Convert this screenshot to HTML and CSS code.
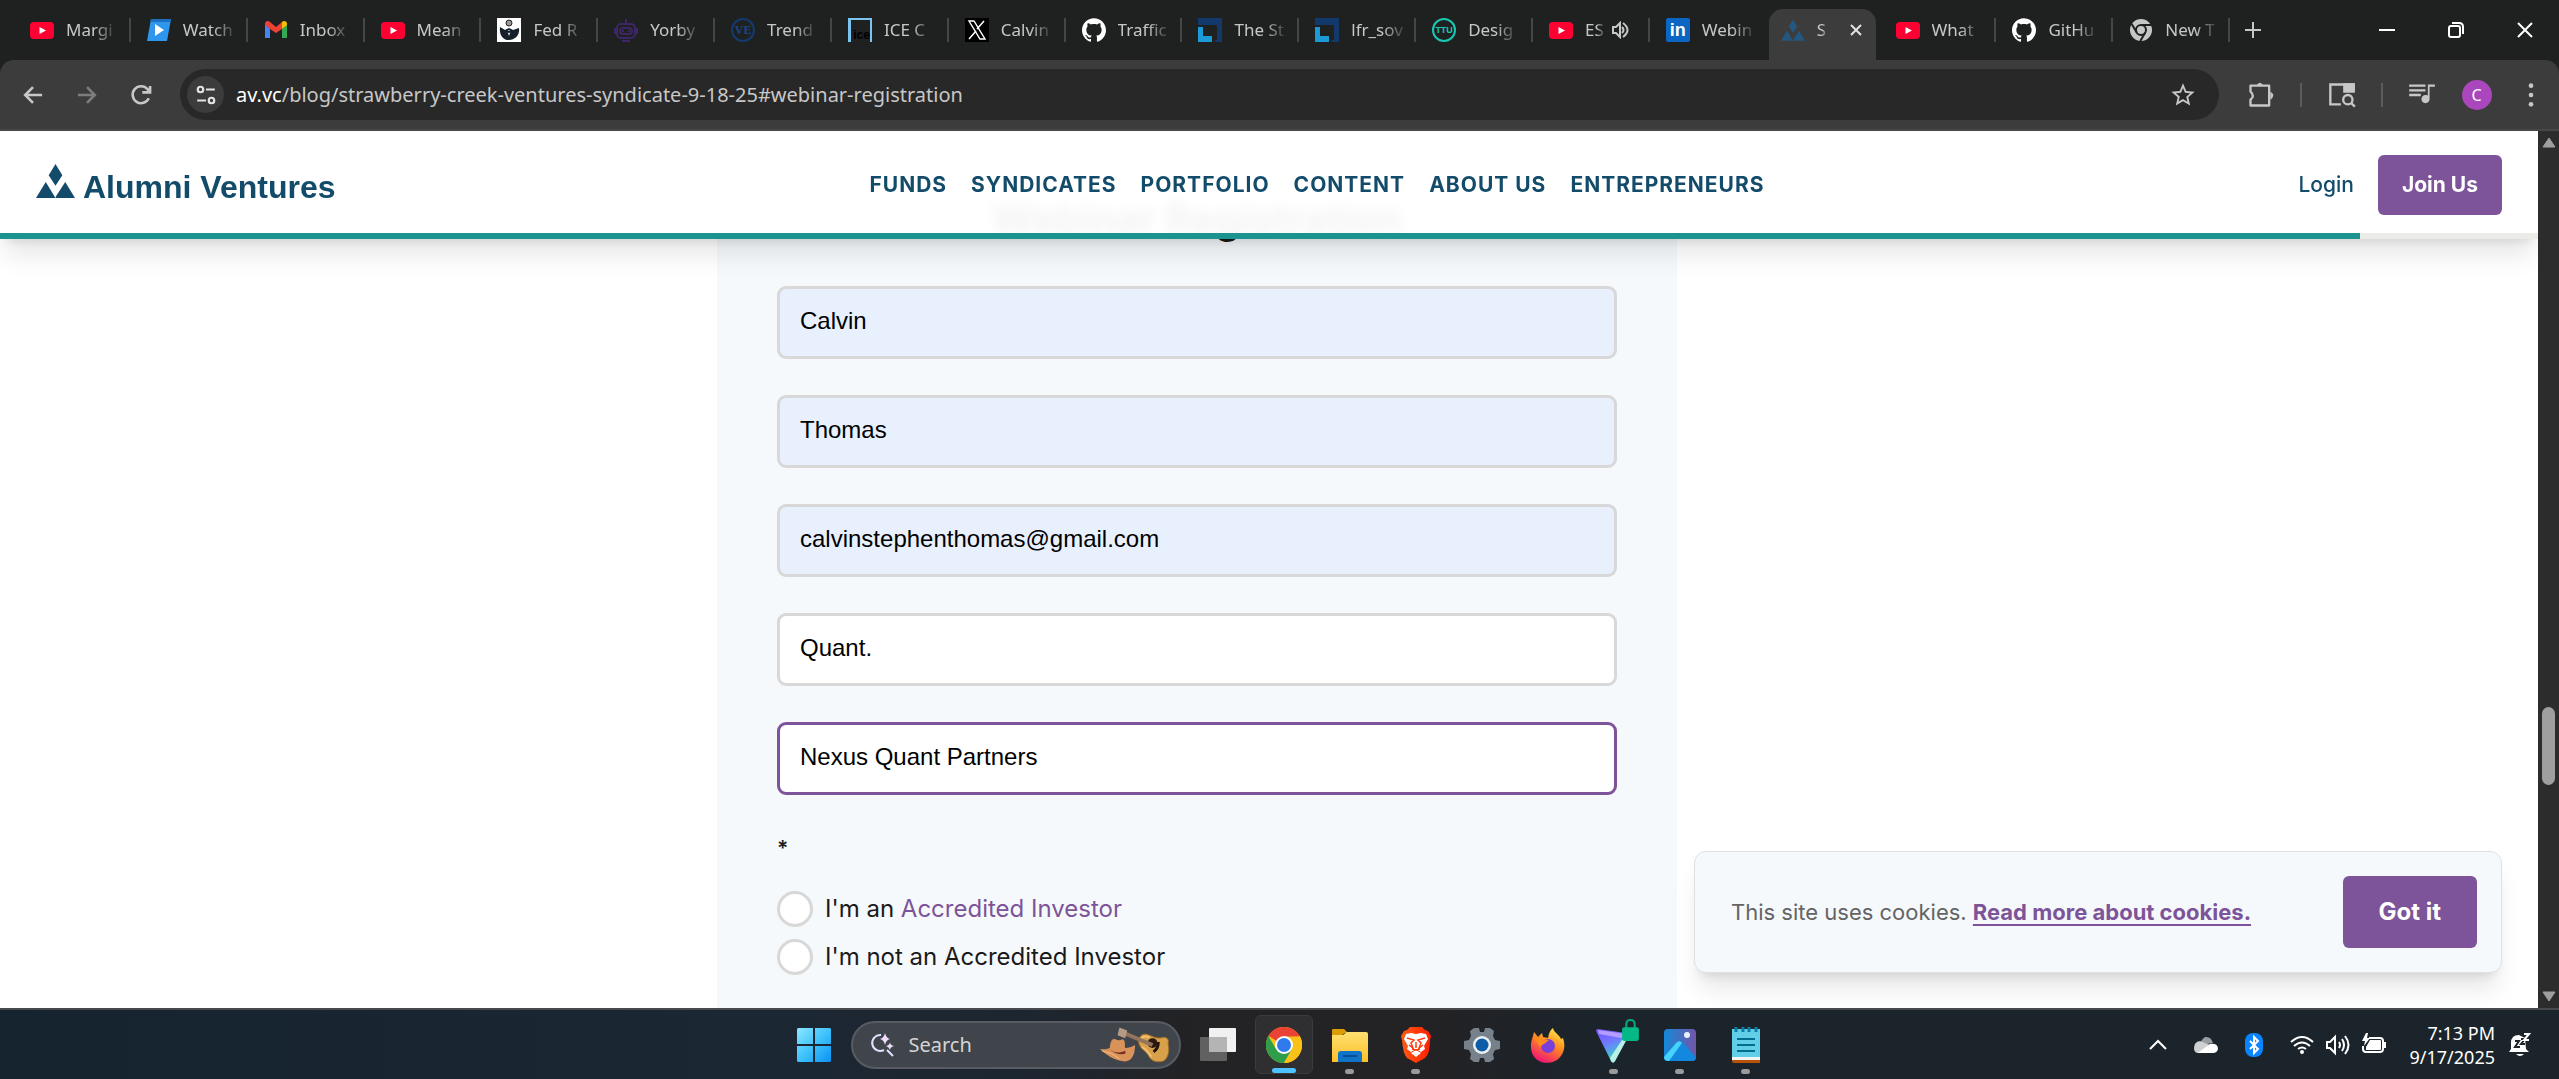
FILE: index.html
```html
<!DOCTYPE html>
<html lang="en">
<head>
<meta charset="utf-8">
<title>Alumni Ventures - Webinar Registration</title>
<link rel="stylesheet" href="styles.css">
</head>
<body>
<svg class="sprite" aria-hidden="true">
  <symbol id="youtube" viewBox="0 0 24 24"><rect y="4" width="24" height="17" rx="4" fill="#ff0033"/><path d="M9.500 9v7l6.500-3.500z" fill="#fff"/></symbol>
  <symbol id="github" viewBox="0 0 24 24"><path fill="#fff" d="M12 .297c-6.63 0-12 5.373-12 12 0 5.303 3.438 9.8 8.205 11.385.6.113.82-.258.82-.577 0-.285-.01-1.04-.015-2.04-3.338.724-4.042-1.61-4.042-1.61C4.422 18.07 3.633 17.7 3.633 17.7c-1.087-.744.084-.729.084-.729 1.205.084 1.838 1.236 1.838 1.236 1.07 1.835 2.809 1.305 3.495.998.108-.776.417-1.305.76-1.605-2.665-.3-5.466-1.332-5.466-5.93 0-1.31.465-2.38 1.235-3.22-.135-.303-.54-1.523.105-3.176 0 0 1.005-.322 3.3 1.23.96-.267 1.98-.399 3-.405 1.02.006 2.04.138 3 .405 2.28-1.552 3.285-1.23 3.285-1.23.645 1.653.24 2.873.12 3.176.765.84 1.23 1.91 1.23 3.22 0 4.61-2.805 5.625-5.475 5.92.42.36.81 1.096.81 2.22 0 1.606-.015 2.896-.015 3.286 0 .315.21.69.825.57C20.565 22.092 24 17.592 24 12.297c0-6.627-5.373-12-12-12"/></symbol>
  <symbol id="lfr" viewBox="0 0 24 24"><path d="M0 0h24v24h-7v-2h2V7H0z" fill="#12396a"/><path d="M0 9h5v9h9v6H0z" fill="#1b9ad6"/></symbol>
  <symbol id="peaks" viewBox="0 0 40 36"><path d="M20 0l7 12-7 11-7-11zM10 19l10 17H0zM30 19l10 17H21l-1-1z"/></symbol>
</svg>

<header class="tabstrip">
  <nav class="tabs" aria-label="Tabs">
    <div class="tab"><button class="tab-label"><svg class="fav"><use href="#youtube"/></svg><span class="title">Margi</span></button></div>
    <div class="tab"><button class="tab-label"><svg class="fav" viewBox="0 0 24 24"><path d="M4 1h20l-4 22H0z" fill="#2f96ee"/><path d="M4 1h20l-.5 3H3.500z" fill="#1b6fc0"/><path d="M8 6l9 6-9 6z" fill="#fff"/></svg><span class="title">Watch</span></button></div>
    <div class="tab"><button class="tab-label"><svg class="fav" viewBox="0 0 24 24"><path d="M1 6v14h5v-9z" fill="#4285f4"/><path d="M23 6v14h-5v-9z" fill="#34a853"/><path d="M1 6c0-3 3-4 5-2l6 5v6l-6-4-5-4z" fill="#ea4335"/><path d="M12 9l6-5v7l-6 4z" fill="#ea4335"/><path d="M18 4c2-2 5-1 5 2v1l-5 4z" fill="#fbbc04"/></svg><span class="title">Inbox</span></button></div>
    <div class="tab"><button class="tab-label"><svg class="fav"><use href="#youtube"/></svg><span class="title">Mean</span></button></div>
    <div class="tab"><button class="tab-label"><svg class="fav" viewBox="0 0 24 24"><path fill="#fff" d="M0 0h24v24H0z"/><circle cx="12" cy="5" r="3" fill="#999" stroke="#222"/><path d="M3 9l5 3 4-2 4 2 6-2c1 7-4 12-10 12S2 17 3 9z" fill="#15202b"/><path d="M10 12l2 6 2-6z" fill="#fff"/><path d="M9 12l3 2 3-2" fill="none" stroke="#15202b" stroke-width="2"/></svg><span class="title">Fed R</span></button></div>
    <div class="tab"><button class="tab-label"><svg class="fav" viewBox="0 0 24 24" fill="none" stroke="#3c2668" stroke-width="2"><rect x="3" y="6" width="18" height="14" rx="4"/><rect x="6" y="10" width="12" height="6" rx="3"/><path d="M12 1v5M1 10v6M23 10v6M8 23h8"/><path d="M9 12v2M15 12v2"/></svg><span class="title">Yorby</span></button></div>
    <div class="tab"><button class="tab-label"><span class="fav fav-ve">VE</span><span class="title">Trend</span></button></div>
    <div class="tab"><button class="tab-label"><span class="fav fav-ice">ice</span><span class="title">ICE C</span></button></div>
    <div class="tab"><button class="tab-label"><svg class="fav" viewBox="0 0 24 24"><path d="M0 0h24v24H0z"/><path d="M4 3h5l11 18h-5z" fill="none" stroke="#fff" stroke-width="1.400"/><path d="M19 3l-7 8M11 13l-7 8" stroke="#fff" stroke-width="1.500"/></svg><span class="title">Calvin</span></button></div>
    <div class="tab"><button class="tab-label"><svg class="fav"><use href="#github"/></svg><span class="title">Traffic</span></button></div>
    <div class="tab"><button class="tab-label"><svg class="fav"><use href="#lfr"/></svg><span class="title">The St</span></button></div>
    <div class="tab"><button class="tab-label"><svg class="fav"><use href="#lfr"/></svg><span class="title">lfr_sov</span></button></div>
    <div class="tab"><button class="tab-label"><span class="fav fav-ttu">TTU</span><span class="title">Desig</span></button></div>
    <div class="tab"><button class="tab-label"><svg class="fav"><use href="#youtube"/></svg><span class="title short">ES</span><svg class="sound" viewBox="0 0 18 18" fill="none" stroke="#c7c7c7" stroke-width="2"><path d="M1 6h3l4-4v14l-4-4H1zM10 6q3 3 0 6M11 2q9 7 0 14"/></svg></button></div>
    <div class="tab before-active"><button class="tab-label"><span class="fav fav-in">in</span><span class="title">Webin</span></button></div>
    <div class="tab active"><button class="tab-label"><svg class="fav peaks-fav"><use href="#peaks"/></svg><span class="title tiny">S</span></button><button class="close" aria-label="Close tab"><svg width="12" height="12" viewBox="0 0 12 12"><path d="M1 1l10 10M11 1L1 11" stroke="#e3e3e3" stroke-width="2"/></svg></button></div>
    <div class="tab"><button class="tab-label"><svg class="fav"><use href="#youtube"/></svg><span class="title">What</span></button></div>
    <div class="tab"><button class="tab-label"><svg class="fav"><use href="#github"/></svg><span class="title">GitHu</span></button></div>
    <div class="tab"><button class="tab-label"><svg class="fav" viewBox="0 0 24 24"><circle cx="12" cy="12" r="11" fill="#c4c7c5"/><circle cx="12" cy="12" r="5" fill="#c4c7c5" stroke="#1f2120" stroke-width="2"/><path d="M12 7h10M7.700 14.500l-5-8.500M16.300 14.500l-5 8.500" stroke="#1f2120" stroke-width="2"/></svg><span class="title">New T</span></button></div>
  </nav>
  <button class="newtab" aria-label="New tab"><svg width="16" height="16" viewBox="0 0 16 16"><path d="M8 0v16M0 8h16" stroke="#c7c7c7" stroke-width="2"/></svg></button>
  <div class="winctl">
    <button aria-label="Minimize"><svg width="16" height="16" viewBox="0 0 16 16"><path d="M0 8h16" stroke="#fff" stroke-width="2"/></svg></button>
    <button aria-label="Restore"><svg width="16" height="16" viewBox="0 0 16 16" fill="none" stroke="#fff" stroke-width="2"><rect x="1" y="4" width="11" height="11" rx="2"/><path d="M4 1h7q4 0 4 4v7"/></svg></button>
    <button aria-label="Close"><svg width="16" height="16" viewBox="0 0 16 16"><path d="M1 1l14 14M15 1L1 15" stroke="#fff" stroke-width="2"/></svg></button>
  </div>
</header>

<div class="toolbar">
  <div class="navbtns">
    <button aria-label="Back"><svg viewBox="0 0 20 20" fill="none" stroke="#c7c7c7" stroke-width="2"><path d="M17 10H4M10 4l-6 6 6 6"/></svg></button>
    <button aria-label="Forward"><svg viewBox="0 0 20 20" fill="none" stroke="#7d7d7d" stroke-width="2"><path d="M3 10h13M10 4l6 6-6 6"/></svg></button>
    <button aria-label="Reload"><svg viewBox="0 0 20 20" fill="none" stroke="#c7c7c7" stroke-width="2"><path d="M16 12.500a6.500 6.500 0 1 1-1-7L17 8M17 3v5h-6"/></svg></button>
  </div>
  <div class="omnibox">
    <button class="siteinfo" aria-label="Site information"><svg viewBox="0 0 20 20" fill="none" stroke="#e3e3e3" stroke-width="2"><circle cx="5" cy="5" r="2.500"/><path d="M10 5h8M2 15h8"/><circle cx="15" cy="15" r="2.500"/></svg></button>
    <div class="url"><b>av.vc</b>/blog/strawberry-creek-ventures-syndicate-9-18-25#webinar-registration</div>
    <button class="star" aria-label="Bookmark"><svg viewBox="0 0 24 24"><path fill="#c7c7c7" d="M22 9.240l-7.190-.62L12 2 9.190 8.630 2 9.240l5.460 4.730L5.820 21 12 17.270 18.180 21l-1.630-7.030L22 9.240zM12 15.400l-3.760 2.270 1-4.280-3.320-2.880 4.380-.38L12 6.100l1.710 4.040 4.380.38-3.320 2.880 1 4.280L12 15.400z"/></svg></button>
  </div>
  <div class="actions">
    <button aria-label="Extensions"><svg viewBox="0 0 24 24" fill="none" stroke="#c7c7c7" stroke-width="2"><path d="M3 4h16v17H3v-5q4-3 0-7z" stroke-linejoin="round"/><path d="M8 4q3-5 6 0zM20 9q5 3.500 0 7z" fill="#c7c7c7" stroke="none"/></svg></button>
    <i class="divider"></i>
    <button aria-label="Search this page"><svg viewBox="0 0 24 24" fill="none" stroke="#c7c7c7" stroke-width="2"><path d="M11 20H2V3h20v6"/><path d="M14 3h8v6h-8z" fill="#c7c7c7"/><circle cx="17" cy="16" r="4"/><path d="M20 19l3 3"/></svg></button>
    <i class="divider"></i>
    <button aria-label="Media controls"><svg viewBox="0 0 24 24"><path fill="#c7c7c7" d="M15 3H1v2h14V3zm0 4H1v2h14V7zM1 13h10v-2H1v2zM17 3v9.500c-1-.5-1.500-.5-2-.5-2 0-3.500 1.500-3.500 3.500S13 19 15 19s3.500-1.500 3.500-3.500V5H23V3h-6z"/></svg></button>
    <button class="avatar" aria-label="Profile">C</button>
    <button aria-label="Menu"><svg viewBox="0 0 24 24" fill="#c7c7c7"><circle cx="12" cy="4" r="2"/><circle cx="12" cy="12" r="2"/><circle cx="12" cy="20" r="2"/></svg></button>
  </div>
</div>

<div class="window">
  <div class="page">
    <main class="article">
      <form class="register">
        <h2>Webinar Registration</h2>
        <input class="filled" type="text" aria-label="First name" value="Calvin">
        <input class="filled" type="text" aria-label="Last name" value="Thomas">
        <input class="filled" type="email" aria-label="Email" value="calvinstephenthomas@gmail.com">
        <input type="text" aria-label="Title" value="Quant.">
        <input class="current" type="text" aria-label="Company" value="Nexus Quant Partners">
        <fieldset>
          <legend>*</legend>
          <div class="choice"><input type="radio" name="accredited" id="yes"><label for="yes">I'm an <a href="#accredited">Accredited Investor</a></label></div>
          <div class="choice"><input type="radio" name="accredited" id="no"><label for="no">I'm not an Accredited Investor</label></div>
        </fieldset>
      </form>
    </main>

    <header class="site-header">
      <div class="bar">
        <a class="logo" href="#home"><svg width="39" height="34" viewBox="0 0 40 36" preserveAspectRatio="none"><use href="#peaks"/></svg><span>Alumni Ventures</span></a>
        <nav class="menu">
          <a href="#funds">FUNDS</a><a href="#syndicates">SYNDICATES</a><a href="#portfolio">PORTFOLIO</a><a href="#content">CONTENT</a><a href="#about">ABOUT US</a><a href="#entrepreneurs">ENTREPRENEURS</a>
        </nav>
        <div class="account"><a href="#login">Login</a><button class="primary join">Join Us</button></div>
      </div>
      <div class="progress"><div style="width:93%"></div></div>
    </header>

    <aside class="cookies">
      <p>This site uses cookies. <a href="#cookies">Read more about cookies.</a></p>
      <button class="primary gotit">Got it</button>
    </aside>
  </div>
  <div class="scrollbar" aria-hidden="true">
    <svg width="14" height="11" viewBox="0 0 14 11"><path d="M7 1l6 9H1z" fill="#9f9f9f" stroke="#9f9f9f" stroke-linejoin="round"/></svg>
    <div class="track"><div class="thumb"></div></div>
    <svg width="14" height="11" viewBox="0 0 14 11"><path d="M7 10l6-9H1z" fill="#9f9f9f" stroke="#9f9f9f" stroke-linejoin="round"/></svg>
  </div>
</div>

<footer class="taskbar">
  <svg class="defs" width="0" height="0"><defs>
    <linearGradient id="win" x2="1" y2="1"><stop stop-color="#8ce6ff"/><stop offset=".5" stop-color="#3fc3fb"/><stop offset="1" stop-color="#0a92f5"/></linearGradient>
    <linearGradient id="fox" x1=".8" y1="0" x2=".3" y2="1"><stop stop-color="#fff04a"/><stop offset=".45" stop-color="#ff8a1e"/><stop offset="1" stop-color="#f0107a"/></linearGradient>
    <linearGradient id="vpn" x2=".4" y2="1"><stop stop-color="#7a4dff"/><stop offset=".5" stop-color="#6e7cff"/><stop offset="1" stop-color="#2ee0c0"/></linearGradient>
    <linearGradient id="gold" x2="0" y2="1"><stop stop-color="#ffdf70"/><stop offset="1" stop-color="#fbc02a"/></linearGradient>
    <linearGradient id="photo" x2="1"><stop stop-color="#1488d8"/><stop offset="1" stop-color="#7256a8"/></linearGradient>
    <linearGradient id="brave" x2="1"><stop stop-color="#ff5a16"/><stop offset="1" stop-color="#ff1f00"/></linearGradient>
  </defs></svg>
  <div></div>
  <div class="apps">
    <button class="app" aria-label="Start"><svg viewBox="0 0 36 36"><path fill="url(#win)" d="M2 1h15v16H1V2zM19 1h15l1 1v15H19zM1 19h16v16H2l-1-1zM19 19h16v15l-1 1H19z"/></svg></button>
    <label class="search">
      <svg class="lens" viewBox="0 0 26 26" fill="none" stroke="#dbe4ff" stroke-width="2"><path d="M12 3a8 8 0 1 0 3 15M18 18l6 6"/><path d="M16 1q1 5 5 6-4 1-5 6-1-5-5-6 4-1 5-6zM21 10q0 3 4 4-4 1-4 4-1-3-4-4 4-1 4-4z" fill="#f0dcff" stroke="none"/></svg>
      <input type="text" aria-label="Search" placeholder="Search">
      <svg class="guitar" viewBox="0 0 72 36"><path d="M40 12c2-6 7-6 11-4 5 2 9 4 14 2 5 0 6 3 5 7 2 7 0 16-6 18-7 1-12-1-14-6-2-5-12-8-10-17z" fill="#d9a04a" stroke="#9c6a25"/><path d="M42 13c1-5 6-4 9-3M43 20c6 3 7 7 10 10" fill="none" stroke="#f0c172" stroke-width="2"/><circle cx="54" cy="16" r="5" fill="#2b1a10"/><path d="M55 25q5-3 5-10" stroke="#22150e" stroke-width="3" fill="none"/><path d="M23 5l31 13" stroke="#94735c" stroke-width="4"/><path d="M20 0l8 3-2 8-8-3z" fill="#b69a84"/><path d="M0 22c5 1 7 0 10-1 1-7 2-10 6-9q3 2 7 0c4 1 2 7 3 9 3 0 7-1 10-3 0 8-2 16-10 17C15 34 6 28 0 22z" fill="#d9935a"/><path d="M10 22q7 6 16 2v3q-9 2-16-5" fill="#7a2f20"/><path d="M2 24q11 2 18 8" stroke="#f5be85" fill="none"/></svg>
    </label>
    <button class="app" aria-label="Task view"><svg viewBox="0 0 36 36"><rect x="9" y="1" width="27" height="24" rx="1" fill="#f1f1f1"/><rect y="10" width="27" height="24" rx="1" fill="#777" opacity=".75"/><path d="M9 10h18v15H9z" fill="#b4b4b4"/></svg></button>
    <button class="app running focused" aria-label="Chrome"><svg viewBox="0 0 36 36"><circle cx="18" cy="18" r="18" fill="#fbc116"/><path d="M18 18L2.400 9A18 18 0 0 1 33.600 9z" fill="#ea4335"/><path d="M2.400 9A18 18 0 0 0 18 36l8-13.500L10 22z" fill="#2f9e4b"/><path d="M18 9.500h16A18 18 0 0 1 18 36l8-14z" fill="#fbc116"/><circle cx="18" cy="18" r="9" fill="#fff"/><circle cx="18" cy="18" r="7" fill="#2f7bed"/></svg></button>
    <button class="app running" aria-label="File Explorer"><svg viewBox="0 0 36 36"><path d="M0 3q0-1 1-1h11l4 4h-3l-3 2H0z" fill="#dc9c05"/><path d="M0 8h11l4-3h19q2 0 2 2v28H0z" fill="url(#gold)"/><path d="M6 35V27q0-3 3-3h18q3 0 3 3v8z" fill="#0f74c8"/><path d="M11 29h14" stroke="#084c93" stroke-width="2"/></svg></button>
    <button class="app running" aria-label="Brave"><svg viewBox="0 0 36 36"><path d="M9 3l3-3h12l3 3 3 1 3 5-1 4q0 14-5 18l-9 5-9-5Q5 27 4 13L3 9l3-5z" fill="url(#brave)"/><path d="M8 7l5-1 5 1 5-1 5 1 2 5-4 7 1 3-4 3-5-3-5 3-4-3 1-3-4-7z" fill="#fff"/><path d="M13 26l5-3 5 3-5 4z" fill="#fff"/><path d="M9 11l7 2-3 3 2 5-4-3M27 11l-7 2 3 3-2 5 4-3M18 15v6M14 22l4 1 4-1" fill="none" stroke="#ff3b0c" stroke-width="1.500"/></svg></button>
    <button class="app" aria-label="Settings"><svg viewBox="0 0 36 36"><path d="M10 1h5l1 4h4l1-4h5l4 3-1 5 2 4 5 1v8l-5 1-2 4 1 5-4 3h-5l-1-4h-4l-1 4h-5l-4-3 1-5-2-4-5-1v-8l5-1 2-4-1-5z" fill="#77818b"/><circle cx="18" cy="18" r="9" fill="#eceff2"/><circle cx="18" cy="18" r="6.500" fill="#0d5ca8"/></svg></button>
    <button class="app" aria-label="Firefox"><svg viewBox="0 0 36 36"><path d="M3 9l1-4 4 5 4-4 1 4 5 1c1-5 2-8 5-10 1 5 6 6 8 11l2-1c3 8 1 17-6 22-10 6-22 2-25-7-2-6-1-12 1-17z" fill="url(#fox)"/><circle cx="18" cy="19" r="7" fill="#7a3fd8"/><path d="M4 11q5-2 9 1l6 1-5 4q-3 1-3 4-4-5-7-10z" fill="#ff8a1e"/></svg></button>
    <button class="app running" aria-label="VPN"><svg viewBox="0 0 36 36"><path d="M0 4q0-2 2-2l28 4q3 1 2 4L19 34q-2 3-4 0z" fill="url(#vpn)"/><path d="M26 13l6-3-13 24q-2 3-4 0l-1-3z" fill="#b8f0e4"/><path d="M2 3l28 4-5 4L3 7z" fill="#b39dff"/></svg><svg class="lock" viewBox="0 0 16 22"><path d="M4 9V5q0-4 4-4t4 4v4" fill="none" stroke="#07a876" stroke-width="2"/><rect y="8" width="16" height="13" rx="2" fill="#04b985"/></svg></button>
    <button class="app running" aria-label="Photos"><svg viewBox="0 0 36 36"><rect x="2" y="2" width="32" height="32" rx="4" fill="url(#photo)"/><path d="M2 30l13-15q2-2 5 0l14 15q0 4-4 4H6q-4 0-4-4z" fill="#1487df"/><path d="M2 30l13-15q3-2 5 1L7 34q-5 0-5-4z" fill="#43d3fb"/><circle cx="25" cy="8" r="3" fill="#e8f2ff"/></svg></button>
    <button class="app running" aria-label="Notepad"><svg viewBox="0 0 36 36"><path d="M4 30h28v6H6q-2 0-2-2z" fill="#b45309"/><path d="M4 28h28v5H4z" fill="#f3f3f3"/><path d="M4 2h28v28H4z" fill="#62cfe8"/><path d="M9 12h18M9 18h18M9 24h18" stroke="#046c91" stroke-width="2"/><path d="M8 0v5M15 0v5M21 0v5M28 0v5" stroke="#0a7fa8" stroke-width="3"/></svg></button>
  </div>
  <div class="tray">
    <button aria-label="Hidden icons"><svg viewBox="0 0 24 24" fill="none" stroke="#fff" stroke-width="2"><path d="M4 16l8-8 8 8"/></svg></button>
    <button aria-label="OneDrive"><svg viewBox="0 0 24 24"><path d="M7 12q-1-5 4-8 6-1 8 6z" fill="#9b9c9e"/><path d="M0 15q0-6 6-7l10 4-13 8q-3-1-3-5z" fill="#cfd0d1"/><path d="M3 20l13-9q8-1 8 5-1 4-5 4z" fill="#fff"/></svg></button>
    <button aria-label="Bluetooth"><svg viewBox="0 0 24 24"><rect x="3" width="18" height="24" rx="8" fill="#0a84ff"/><path d="M8 8l8 8-4 4V4l4 4-8 8" fill="none" stroke="#fff" stroke-width="2"/></svg></button>
    <button class="status" aria-label="Network, sound and battery">
      <svg viewBox="0 0 24 24" fill="none" stroke="#fff" stroke-width="2"><path d="M1 9q11-10 22 0M4 13q8-7 16 0M8 16q4-3 8 0"/><circle cx="12" cy="19" r="1"/></svg>
      <svg viewBox="0 0 24 24" fill="none" stroke="#fff" stroke-width="2"><path d="M1 9h3l5-5v16l-5-5H1zM13 9q2 3 0 6M16 6q4 6 0 12M19 3q7 9 0 18"/></svg>
      <svg viewBox="0 0 24 24"><path d="M7 5h11q3 0 3 3v8q0 3-3 3H4q-3 0-3-3v-3" fill="none" stroke="#fff" stroke-width="2"/><path d="M8 7h10q1 0 1 1v8q0 1-1 1H4v-3zM22 9h2v6h-2zM4 0L0 8h3l-1 5 6-8H5l1-5z" fill="#fff"/></svg>
    </button>
    <div class="clock"><span>7:13 PM</span><span>9/17/2025</span></div>
    <button aria-label="Notifications"><svg viewBox="0 0 24 24"><path d="M4 16V10q0-8 8-8l6 3 1 11 3 3H2z" fill="#fff"/><path d="M9 21h8q-4 4-8 0z" fill="#fff"/><path d="M8 8h4l-4 6h5M14 6h4l-4 5h4" stroke="#1b242b" stroke-width="2" fill="none"/><path d="M17 1h5l-5 6h5" stroke="#fff" stroke-width="2" fill="none"/></svg></button>
  </div>
</footer>
</body>
</html>
```
FILE: styles.css
```css
* { box-sizing: border-box; }
body {
  margin: 0;
  height: 100vh;
  display: flex;
  flex-direction: column;
  overflow: hidden;
  background: #1f2120;
  font-family: "Noto Sans", "Open Sans", sans-serif;
}
button { border: 0; padding: 0; background: none; font: inherit; color: inherit; }
a { text-decoration: none; color: inherit; }
svg { display: block; flex: none; }
.sprite { position: absolute; width: 0; height: 0; }

/* Tab strip */
.tabstrip { display: flex; height: 60px; padding-left: 14px; color: #c7c7c7; font-size: 17px; }
.tabs { display: flex; flex: 0 1 2216px; min-width: 0; }
.tab { flex: 1 1 117px; min-width: 0; display: flex; align-items: center; padding-left: 16px; position: relative; }
.tab::after { content: ""; position: absolute; right: 0; top: 18px; width: 2px; height: 24px; background: #444746; }
.tab.before-active::after, .tab.active::after { display: none; }
.tab-label { display: flex; align-items: center; gap: 12px; min-width: 0; }
.fav { width: 24px; height: 24px; flex: none; }
.title {
  min-width: 46px; white-space: nowrap; text-align: left; line-height: 28px;
  -webkit-mask-image: linear-gradient(to right, #000 60%, rgba(0,0,0,.2));
  mask-image: linear-gradient(to right, #000 60%, rgba(0,0,0,.2));
}
.title.short, .title.tiny { min-width: 0; }
.title.short { margin-right: -4px; }
.sound { width: 18px; height: 18px; }
.fav-ve, .fav-ttu, .fav-ice, .fav-in { display: grid; place-items: center; line-height: 1; }
.fav-ve { border: 2px solid #153a70; border-radius: 50%; color: #17468c; font: bold 12px "Liberation Serif", serif; }
.fav-ttu { border: 2px solid #19c8b4; border-radius: 50%; color: #19c8b4; font: bold 9px "Liberation Sans", sans-serif; }
.fav-ice { border: solid #7cc4f0; border-width: 2px 2px 0 3px; color: #000; font: bold 12px "Liberation Sans", sans-serif; place-items: end; }
.fav-in { border-radius: 2px; background: #0a66c2; color: #fff; font: bold 18px "Liberation Sans", sans-serif; }
.tab.active { background: #3c3c3c; border-radius: 14px 14px 0 0; margin: 9px 4px 0 2px; padding: 0 14px 0 12px; justify-content: space-between; flex-basis: 107px; }
.tab.active .tab-label, .tab.active .close { margin-top: -9px; }
.peaks-fav { fill: #24577f; }
.newtab { width: 46px; display: grid; place-items: center; }
.winctl { margin-left: auto; display: flex; }
.winctl button { width: 69px; display: grid; place-items: center; }

/* Toolbar */
.toolbar {
  display: flex; align-items: center; height: 71px; flex: none; padding: 0 14px 0 6px; gap: 12px;
  background: #3c3c3c; border-bottom: 2px solid #474747; border-radius: 14px 14px 0 0;
}
.navbtns { display: flex; width: 162px; }
.navbtns button { width: 54px; display: grid; place-items: center; }
.navbtns svg, .actions svg, .star svg { width: 28px; height: 28px; }
.navbtns svg { width: 26px; }
.omnibox { flex: 1; display: flex; align-items: center; height: 51px; padding: 0 22px 0 7px; border-radius: 26px; background: #282828; }
.siteinfo { width: 37px; height: 37px; border-radius: 50%; background: #3c3c3c; display: grid; place-items: center; }
.siteinfo svg { width: 22px; height: 22px; }
.url { flex: 1; padding-left: 12px; color: #c7c7c7; font-size: 20px; line-height: 28px; }
.url b { font-weight: 400; color: #fff; }
.actions { display: flex; align-items: center; justify-content: space-between; width: 314px; padding-left: 16px; }
.divider { width: 2px; height: 24px; background: #5c5c5c; }
.avatar { width: 30px; height: 30px; border-radius: 50%; background: #ab47bc; color: #fff; font-size: 16px; line-height: 30px; }

/* Browser window content */
.window { flex: 1; display: flex; min-height: 0; }
.page { flex: 1; position: relative; overflow: hidden; background: #fff; font-family: Inter, sans-serif; }
.scrollbar { width: 21px; background: #2c2c2c; display: flex; flex-direction: column; align-items: center; padding: 6px 0; }
.track { flex: 1; width: 13px; display: flex; flex-direction: column; }
.track::before { content: ""; flex: 560; }
.track::after { content: ""; flex: 206; }
.thumb { flex: 79; border-radius: 7px; background: #9f9f9f; }

.site-header {
  position: absolute; inset: 0 0 auto; background: rgba(255,255,255,.95); backdrop-filter: blur(6px);
  box-shadow: 0 20px 25px -5px rgba(0,0,0,.1), 0 8px 10px -6px rgba(0,0,0,.1);
  color: #134b6b;
}
.bar { display: flex; align-items: center; justify-content: space-between; padding: 24px 36px 18px; }
.logo { display: flex; align-items: flex-end; gap: 8px; margin-bottom: 8px; font: bold 32px/32px "Liberation Sans", sans-serif; }
.logo svg { fill: #134b6b; }
.logo span { height: 27px; }
.menu { display: flex; gap: 24px; font-size: 21px; font-weight: 700; line-height: 30px; letter-spacing: 1px; }
.account { display: flex; align-items: center; gap: 24px; font-size: 21px; font-weight: 500; line-height: 30px; }
.primary { background: #7d5499; color: #fff; font-weight: 700; border-radius: 6px; }
.join { height: 60px; padding: 0 24px; }
.progress { height: 6px; background: #ebece8; }
.progress div { height: 100%; background: #1b9490; }

.article { display: grid; grid-template-columns: 717fr 960px 861fr; min-height: 100%; }
.register { grid-column: 2; background: #f5f9fc; padding: 64px 60px 32px; display: flex; flex-direction: column; gap: 36px; color: #1a1a1a; }
.register h2 { margin: 0 0 7px; font-size: 40px; line-height: 48px; text-align: center; font-weight: 700; }
.register > input {
  height: 73px; padding: 0 20px 3px; border: 3px solid #d8d8d8; border-radius: 9px; background: #fff;
  color: #000; font: 24px "Liberation Sans", sans-serif; outline: none;
}
.register > input.filled { background: #e8f0fe; }
.register > input.current { border-color: #7d5499; }
fieldset { border: 0; margin: 0; padding: 0; display: flex; flex-direction: column; gap: 12px; font-size: 24px; line-height: 36px; }
legend { padding: 0; margin-bottom: 24px; font-size: 21px; font-weight: 600; }
.choice { display: flex; align-items: center; gap: 12px; }
.choice input { appearance: none; width: 36px; height: 36px; margin: 0; border: 3px solid #d8d8d8; border-radius: 50%; background: #fff; }
.choice a { color: #7d5499; }

.cookies {
  position: absolute; right: 36px; bottom: 35px; width: 808px; padding: 24px; padding-left: 36px;
  display: flex; align-items: center; justify-content: space-between;
  background: #f5f9fc; border: 1px solid #e0e0e0; border-radius: 12px;
  box-shadow: 0 20px 25px -5px rgba(0,0,0,.1), 0 8px 10px -6px rgba(0,0,0,.1);
  color: #646464; font-size: 24px; line-height: 36px;
}
.cookies p { margin: 0; font-size: 22px; }
.cookies a { color: #7d5499; font-weight: 700; text-decoration: underline; text-decoration-thickness: 2px; text-underline-offset: 4px; }
.gotit { height: 72px; padding: 0 36px; }

/* Taskbar */
.taskbar {
  flex: none; height: 71px; display: grid; grid-template-columns: 1fr auto 1fr; align-items: stretch;
  border-top: 2px solid #47494c; color: #fff;
  background: linear-gradient(to right, #16242f, #1b2733 30%, #1d2630 40%, #232224 47%, #232224 56%, #1b242b 62%, #1b242b);
}
.defs { position: absolute; }
.apps { display: flex; align-items: center; gap: 8px; }
.app { width: 58px; height: 59px; display: grid; place-items: center; position: relative; border-radius: 6px; }
.app > svg { width: 36px; height: 36px; }
.app.focused { background: #2f2f31; border: 1px solid #3b3b3d; }
.app.running::after { content: ""; position: absolute; bottom: 0; width: 9px; height: 5px; border-radius: 3px; background: #9a9a9a; }
.app.focused::after { width: 24px; background: #4cc2ff; }
.app > svg.lock { position: absolute; right: 4px; top: 4px; width: 17px; height: 23px; }
.search { width: 330px; height: 48px; display: flex; align-items: center; gap: 14px; padding: 0 9px 0 16px; border: 2px solid #585c62; border-radius: 24px; background: #40444b; }
.search input { flex: 1; min-width: 0; border: 0; background: none; color: #d5d5d5; font: 20px "Noto Sans", sans-serif; outline: none; padding: 0; }
.search input::placeholder { color: #d5d5d5; opacity: 1; }
.lens { width: 26px; height: 26px; }
.guitar { width: 70px; height: 36px; }
.tray { display: flex; align-items: center; justify-content: flex-end; padding-right: 28px; gap: 24px; }
.tray svg { width: 24px; height: 24px; }
.status { display: flex; gap: 12px; }
.clock { display: flex; flex-direction: column; align-items: flex-end; font-size: 18px; line-height: 24px; }
.tray .clock + button { margin-left: -12px; }
```
